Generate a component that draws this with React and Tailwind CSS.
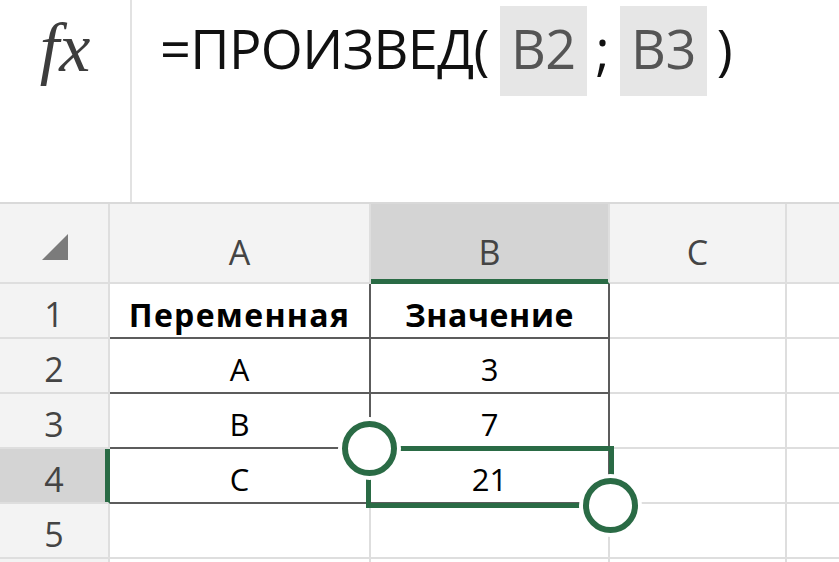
import React from "react";

function Cell({ className = "", children }) {
  return (
    <div className={"flex items-center justify-center h-[55px] border-b-2 pt-[8px] " + className}>
      {children}
    </div>
  );
}

export default function App() {
  const light = "border-[#dedede]";
  const rows = [
    { n: "1", a: "Переменная", b: "Значение", bold: true },
    { n: "2", a: "A", b: "3" },
    { n: "3", a: "B", b: "7" },
    { n: "4", a: "C", b: "21", sel: true },
    { n: "5", a: "", b: "" },
    { n: "", a: "", b: "" },
  ];
  return (
    <div className="relative w-[839px] h-[562px] overflow-hidden bg-white font-['Open_Sans',sans-serif]">
      {/* formula bar */}
      <div className="flex h-[204px] border-b-2 border-[#d9d9d9]">
        <div className="w-[132px] border-r-2 border-[#e2e2e2] flex justify-center pt-[6px]">
          <span className="font-['Liberation_Serif',serif] italic text-[70px] leading-[84px] text-[#3d3d3d]">
            fx
          </span>
        </div>
        <div className="flex-1 flex items-stretch h-[90px] mt-[6px] pl-[28px] text-[54px] tracking-[-0.6px] text-[#111] whitespace-pre">
          <span className="flex items-center pb-[6px]">=ПРОИЗВЕД(</span>
          <span className="ml-[11px] px-[11px] bg-[#e6e6e6] text-[#555] flex items-center pb-[6px]">B2</span>
          <span className="ml-[9px] mr-[11px] flex items-center pb-[6px]">;</span>
          <span className="px-[11px] bg-[#e6e6e6] text-[#555] flex items-center pb-[6px]">B3</span>
          <span className="ml-[10px] flex items-center pb-[6px]">)</span>
        </div>
      </div>

      {/* grid */}
      <div className="grid grid-cols-[110px_261px_239px_177px_1fr] text-[#444]">
        {/* header */}
        <div className={"h-[80px] bg-[#f3f3f3] border-r-2 border-b-2 " + light + " flex items-end justify-end pb-[22px] pr-[40px]"}>
          <svg width="26" height="26" viewBox="0 0 26 26">
            <polygon points="0,26 26,26 26,0" fill="#7b7b7b" />
          </svg>
        </div>
        <div className={"h-[80px] bg-[#f3f3f3] border-r-2 border-b-2 " + light + " flex items-center justify-center pt-[18px] text-[34px]"}>A</div>
        <div className="h-[80px] bg-[#d4d4d4] border-r-2 border-b-2 border-r-[#dedede] border-b-[#2a6b45] shadow-[inset_0_-3px_0_#2a6b45] flex items-center justify-center pt-[18px] text-[34px]">B</div>
        <div className={"h-[80px] bg-[#f3f3f3] border-r-2 border-b-2 " + light + " flex items-center justify-center pt-[18px] text-[34px]"}>C</div>
        <div className={"h-[80px] bg-[#f3f3f3] border-b-2 " + light}></div>

        {rows.map((r, i) => {
          const inTable = i < 4;
          return (
            <React.Fragment key={i}>
              <Cell
                className={
                  "border-r-2 text-[34px] " +
                  (r.sel
                    ? "bg-[#d4d4d4] border-r-[#2a6b45] border-b-[#dedede] shadow-[inset_-3px_0_0_#2a6b45]"
                    : "bg-[#f3f3f3] " + light)
                }
              >
                {r.n}
              </Cell>
              <Cell
                className={
                  "border-r-2 text-[31px] text-black " +
                  (r.bold ? "font-bold tracking-[1.3px] text-[32px] " : "") +
                  (inTable ? "border-[#5c5c5c]" : light)
                }
              >
                {r.a}
              </Cell>
              <Cell
                className={
                  "border-r-2 text-[31px] text-black " +
                  (r.bold ? "font-bold tracking-[0.6px] text-[32px] " : "") +
                  (inTable ? "border-[#5c5c5c]" : light)
                }
              >
                {r.b}
              </Cell>
              <Cell className={"border-r-2 " + light} />
              <Cell className={light} />
            </React.Fragment>
          );
        })}
      </div>

      {/* selection */}
      <div className="absolute left-[366px] top-[446px] w-[248px] h-[62px] border-[5px] border-[#2a6b45]" />
      <div className="absolute left-[338px] top-[417px] w-[63px] h-[63px] rounded-full bg-white p-[4px]">
        <div className="w-full h-full rounded-full border-[6px] border-[#2a6b45] bg-white" />
      </div>
      <div className="absolute left-[579px] top-[474px] w-[63px] h-[63px] rounded-full bg-white p-[4px]">
        <div className="w-full h-full rounded-full border-[6px] border-[#2a6b45] bg-white" />
      </div>
    </div>
  );
}
